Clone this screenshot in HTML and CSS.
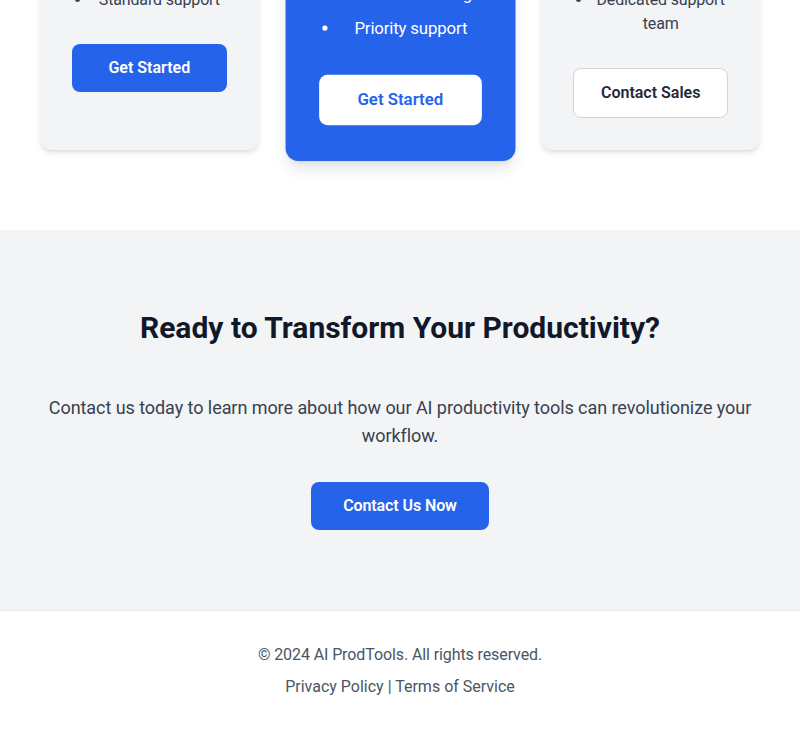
FILE: index.html
```html
<!DOCTYPE html>
<html lang="en">
<head>
<meta charset="utf-8">
<title>AI ProdTools</title>
<link rel="stylesheet" href="styles.css">
</head>
<body>
<section class="pricing">
  <div class="cards">
    <div class="card">
      <h3 class="card-title">Basic</h3>
      <p class="price">$9<span>/month</span></p>
      <p class="desc">For individuals<br>getting started</p>
      <ul class="features">
        <li>Core AI tools</li>
        <li>Limited AI usage</li>
        <li>Standard support</li>
      </ul>
      <a class="btn btn-primary" href="#">Get Started</a>
    </div>
    <div class="card card-featured">
      <h3 class="card-title">Pro</h3>
      <p class="price">$29<span>/month</span></p>
      <p class="desc">For professionals<br>and small teams</p>
      <ul class="features">
        <li>Access to all premium AI tools</li>
        <li>Increased AI usage</li>
        <li>Priority support</li>
      </ul>
      <a class="btn btn-light" href="#">Get Started</a>
    </div>
    <div class="card">
      <h3 class="card-title">Enterprise</h3>
      <p class="price">Custom</p>
      <p class="desc">For large<br>organizations</p>
      <ul class="features">
        <li>Custom solutions</li>
        <li>Unlimited usage</li>
        <li>Dedicated support team</li>
      </ul>
      <a class="btn btn-outline" href="#">Contact Sales</a>
    </div>
  </div>
</section>

<section class="cta">
  <h2 class="cta-title">Ready to Transform Your Productivity?</h2>
  <p class="cta-text">Contact us today to learn more about how our AI productivity tools can revolutionize your workflow.</p>
  <a class="btn btn-primary btn-cta" href="#">Contact Us Now</a>
</section>

<footer class="footer">
  <p class="copyright">&copy; 2024 AI ProdTools. All rights reserved.</p>
  <p><a href="#">Privacy Policy</a> | <a href="#">Terms of Service</a></p>
</footer>
</body>
</html>
```

FILE: styles.css
```css
* { box-sizing: border-box; }

html, body {
  margin: 0;
  padding: 0;
}

body {
  font-family: Roboto, "Noto Sans", sans-serif;
  color: #374151;
  font-size: 16px;
  line-height: 24px;
  background: #ffffff;
}

p { margin: 0; }

a { text-decoration: none; color: inherit; }

.pricing {
  margin-top: -288px;
  padding: 0 40px 80px;
}

.cards {
  display: grid;
  grid-template-columns: repeat(3, 1fr);
  gap: 32px;
}

.card {
  background: #f3f4f6;
  border-radius: 12px;
  padding: 32px;
  text-align: center;
  box-shadow: 0 4px 6px -1px rgba(0,0,0,0.1), 0 2px 4px -2px rgba(0,0,0,0.1);
}

.card-featured {
  background: #2563eb;
  color: #ffffff;
  transform: scale(1.05);
  box-shadow: 0 10px 15px -3px rgba(0,0,0,0.1), 0 4px 6px -4px rgba(0,0,0,0.1);
}

.card-title {
  margin: 0 0 12px;
  font-size: 24px;
  line-height: 32px;
  font-weight: 700;
  color: #111827;
}

.card-featured .card-title { color: #ffffff; }

.price {
  font-size: 36px;
  line-height: 40px;
  font-weight: 700;
  color: #111827;
  margin-bottom: 16px;
}

.price span {
  font-size: 16px;
  line-height: 20px;
  font-weight: 400;
  color: #6b7280;
}

.card-featured .price,
.card-featured .price span { color: #ffffff; }

.desc {
  margin-bottom: 32px;
}

.features {
  list-style: disc;
  margin: 0 0 32px;
  padding-left: 20px;
  letter-spacing: -0.15px;
}

.features li {
  margin-bottom: 8px;
}

.features li:last-child { margin-bottom: 0; }

.btn {
  display: inline-block;
  font-weight: 600;
  font-size: 16px;
  line-height: 24px;
  padding: 12px 32px;
  border-radius: 8px;
}

.card .btn {
  display: block;
  width: 100%;
  padding: 12px 16px;
}

.btn-primary {
  background: #2563eb;
  color: #ffffff;
}

.btn-light {
  background: #ffffff;
  color: #2563eb;
}

.btn-outline {
  background: #ffffff;
  color: #1f2937;
  border: 1px solid #d1d5db;
}

.cta {
  background: #f3f4f6;
  padding: 80px 40px;
  text-align: center;
}

.cta-title {
  margin: 0 0 48px;
  font-size: 30px;
  line-height: 36px;
  font-weight: 700;
  color: #111827;
}

.cta-text {
  font-size: 18px;
  line-height: 28px;
  margin-bottom: 32px;
  letter-spacing: -0.06px;
}

.btn-cta {
  letter-spacing: -0.1px;
}

.footer {
  border-top: 1px solid #e5e7eb;
  padding: 32px 40px;
  text-align: center;
  color: #4b5563;
}

.copyright { letter-spacing: -0.1px; }

.footer p + p { margin-top: 8px; }
```
